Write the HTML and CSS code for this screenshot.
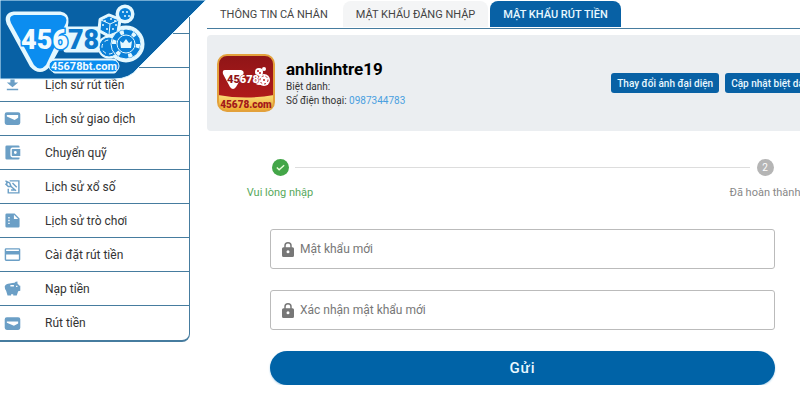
FILE: index.html
```html
<!DOCTYPE html>
<html lang="vi">
<head>
    <meta charset="UTF-8">
    <meta name="viewport" content="width=device-width, initial-scale=1.0">
    <title>Mật khẩu rút tiền</title>
    <link rel="stylesheet" href="styles.css">
</head>
<body>
    <a class="brand" href="#" aria-label="45678bt.com">
        <svg width="208" height="82" viewBox="0 0 208 82">
            <path d="M0 0H206L138 68Q130 79 114 79H0Z" fill="#0861a5" stroke="#d9f3ff" stroke-width="1"/>
            <!-- light outline behind the logo parts -->
            <g fill="#e4f8ff" stroke="#e4f8ff" stroke-width="5" stroke-linejoin="round">
                <path d="M14 14H60Q67 15 66 22L64 36L48 65Q40 74 32 65L9 23Q6 15 14 14Z"/>
                <path d="M66 29H98V50H66Z"/>
                <path d="M101 20L109 16L119 20L117 32L109 35L100 30Z"/>
                <circle cx="125" cy="14" r="7"/>
                <circle cx="109" cy="47" r="9"/>
                <circle cx="126" cy="44" r="16"/>
                <path d="M55 61H114Q119 66 114 71H55Q50 66 55 61Z"/>
            </g>
            <path d="M14 15H61Q68 16 66 23L46 65Q40 72 34 65L11 23Q8 16 14 15Z" fill="#0b8df0"/>
            <g fill="#0a80d8" stroke="#e4f8ff">
                <path d="M101 20L109 16L119 20L117 32L109 35L100 30Z"/>
                <path d="M101 20L110 24L119 20M110 24L109 35" fill="none"/>
                <circle cx="125" cy="14" r="6" stroke="none"/>
                <circle cx="109" cy="47" r="10"/>
                <circle cx="109" cy="47" r="7" fill="none" stroke-dasharray="4 3"/>
                <circle cx="126" cy="44" r="15"/>
                <circle cx="126" cy="44" r="12" fill="none" stroke-width="4" stroke-dasharray="4 8.5"/>
                <circle cx="126" cy="44" r="9"/>
            </g>
            <path d="M121 48L120 41L123 43L126 39L129 43L132 41L131 48Z" fill="#e4f8ff"/>
            <g fill="#e4f8ff">
                <circle cx="105" cy="21" r="1"/><circle cx="111" cy="19" r="1"/><circle cx="115" cy="21" r="1"/>
                <circle cx="103" cy="25" r="1"/><circle cx="107" cy="29" r="1"/><circle cx="113" cy="29" r="1"/><circle cx="116" cy="25" r="1"/>
                <circle cx="123" cy="12" r="1"/><circle cx="127" cy="12" r="1"/><circle cx="125" cy="16" r="1"/><circle cx="129" cy="16" r="1"/>
            </g>
            <text class="brand-number" x="21" y="49"><tspan class="brand-light">456</tspan><tspan class="brand-dark">78</tspan></text>
            <rect x="49" y="60" width="70" height="12" rx="6" fill="#0b8df0" stroke="#e4f8ff"/>
            <text class="brand-domain" x="84" y="70" text-anchor="middle">45678bt.com</text>
        </svg>
    </a>

    <div class="layout">
        <nav class="sidebar">
            <div class="sidebar-item"></div>
            <div class="sidebar-item"></div>
            <a class="sidebar-item" href="#">
                <svg viewBox="0 0 24 24"><path d="M9 3H15V9H20L12 16L4 9H9ZM4 18H20V20H4Z"/></svg>
                Lịch sử rút tiền
            </a>
            <a class="sidebar-item" href="#">
                <svg viewBox="0 0 24 24"><path fill-rule="evenodd" d="M4 3H20Q23 3 23 6V18Q23 21 20 21H4Q1 21 1 18V6Q1 3 4 3ZM4 7V9L15 14L20 11V7Z"/></svg>
                Lịch sử giao dịch
            </a>
            <a class="sidebar-item" href="#">
                <svg viewBox="0 0 24 24"><path fill-rule="evenodd" d="M4 2H20Q22 2 22 4V5H12Q9 5 9 8V16Q9 19 12 19H22V20Q22 22 20 22H4Q2 22 2 20V4Q2 2 4 2ZM12 7H23V17H12Q11 17 11 16V8Q11 7 12 7ZM16 10A2 2 0 0 0 16 14A2 2 0 0 0 16 10Z"/></svg>
                Chuyển quỹ
            </a>
            <a class="sidebar-item" href="#">
                <svg viewBox="0 0 24 24"><path d="M8 4H21V21H6V15M2 4L8 7L10 12L17 18M2 8L6 12H10M12 7L18 13M4 5V9M10 17H15" fill="none" stroke="currentColor" stroke-width="2"/></svg>
                Lịch sử xổ số
            </a>
            <a class="sidebar-item" href="#">
                <svg viewBox="0 0 24 24"><path fill-rule="evenodd" d="M4 2H15L22 9V20Q22 22 20 22H4Q2 22 2 20V4Q2 2 4 2ZM14 4V10H20ZM6 7V9H8V7ZM6 11V13H8V11ZM6 15V17H8V15Z"/></svg>
                Lịch sử trò chơi
            </a>
            <a class="sidebar-item" href="#">
                <svg viewBox="0 0 24 24"><path fill-rule="evenodd" d="M3 3H21Q23 3 23 5V19Q23 21 21 21H3Q1 21 1 19V5Q1 3 3 3ZM3 5V7H21V5ZM3 12V19H21V12Z"/></svg>
                Cài đặt rút tiền
            </a>
            <a class="sidebar-item" href="#">
                <svg viewBox="0 0 24 24"><path fill-rule="evenodd" d="M8 5Q12 4 15 4Q16 2 19 2V5L22 8H23V15L20 16L18 22H13V20H10V22H5L3 15Q1 13 1 9Q3 5 8 5ZM9 7V9H14V7ZM17 8V10H19V8Z"/></svg>
                Nạp tiền
            </a>
            <a class="sidebar-item" href="#">
                <svg viewBox="0 0 24 24"><path fill-rule="evenodd" d="M4 3H20Q23 3 23 6V18Q23 21 20 21H4Q1 21 1 18V6Q1 3 4 3ZM4 9V11L14 15L20 12V9Z"/></svg>
                Rút tiền
            </a>
        </nav>

        <main class="content">
            <div class="tabs" role="tablist">
                <button class="tab" role="tab">THÔNG TIN CÁ NHÂN</button>
                <button class="tab tab-hover" role="tab">MẬT KHẨU ĐĂNG NHẬP</button>
                <button class="tab tab-active" role="tab" aria-selected="true">MẬT KHẨU RÚT TIỀN</button>
            </div>

            <section class="profile">
                <svg class="avatar" viewBox="0 0 58 58">
                    <defs>
                        <linearGradient id="red" x1="0" y1="0" x2="0" y2="1">
                            <stop offset="0" stop-color="#8f1517"/>
                            <stop offset="1" stop-color="#b91c1c"/>
                        </linearGradient>
                        <linearGradient id="gold" x1="0" y1="0" x2="0" y2="1">
                            <stop offset="0" stop-color="#f9dc78"/>
                            <stop offset="1" stop-color="#eda72c"/>
                        </linearGradient>
                    </defs>
                    <rect x="1" y="1" width="56" height="56" rx="9" fill="url(#red)"/>
                    <path d="M1 41Q29 46 57 41V48Q57 57 48 57H10Q1 57 1 48Z" fill="url(#gold)"/>
                    <rect x="1" y="1" width="56" height="56" rx="9" fill="none" stroke="#e3a13c" stroke-width="2"/>
                    <path d="M8 16H24Q28 17 26 21L19 33Q16 37 13 33L6 20Q5 16 8 16Z" fill="#fff"/>
                    <g fill="#fff">
                        <circle cx="42" cy="18" r="4"/><circle cx="47" cy="15" r="2"/>
                        <circle cx="42" cy="27" r="4"/><circle cx="47" cy="26" r="6"/>
                    </g>
                    <circle cx="47" cy="26" r="4" fill="none" stroke="#b91c1c" stroke-width="1" stroke-dasharray="2 2"/>
                    <circle cx="47" cy="26" r="1" fill="#b91c1c"/>
                    <circle cx="41" cy="17" r="1" fill="#b91c1c"/><circle cx="43" cy="19" r="1" fill="#b91c1c"/>
                    <text class="avatar-number" x="10" y="29"><tspan fill="#8f1517">45</tspan><tspan class="avatar-light">678</tspan></text>
                    <text class="avatar-domain" x="29" y="54" text-anchor="middle">45678.com</text>
                </svg>
                <div class="profile-info">
                    <h1>anhlinhtre19</h1>
                    <p>Biệt danh:</p>
                    <p>Số điện thoại: <a href="#">0987344783</a></p>
                </div>
                <div class="profile-actions">
                    <button class="small-button">Thay đổi ảnh đại diện</button>
                    <button class="small-button">Cập nhật biệt danh</button>
                </div>
            </section>

            <div class="stepper">
                <div class="step step-done">
                    <span class="step-circle">
                        <svg viewBox="0 0 24 24"><path d="M4 12L9 17L20 7" fill="none" stroke="#e8ffd9" stroke-width="3"/></svg>
                    </span>
                    <span>Vui lòng nhập</span>
                </div>
                <div class="step-line"></div>
                <div class="step">
                    <span class="step-circle">2</span>
                    <span>Đã hoàn thành</span>
                </div>
            </div>

            <form class="password-form">
                <div class="field">
                    <svg viewBox="0 0 16 20"><path fill-rule="evenodd" d="M3 7V5A5 5 0 0 1 13 5V7H14Q16 7 16 9V18Q16 20 14 20H2Q0 20 0 18V9Q0 7 2 7ZM5 7H11V5A3 3 0 0 0 5 5ZM8 11A2 2 0 0 0 8 15A2 2 0 0 0 8 11Z"/></svg>
                    <input type="password" placeholder="Mật khẩu mới" aria-label="Mật khẩu mới">
                </div>
                <div class="field">
                    <svg viewBox="0 0 16 20"><path fill-rule="evenodd" d="M3 7V5A5 5 0 0 1 13 5V7H14Q16 7 16 9V18Q16 20 14 20H2Q0 20 0 18V9Q0 7 2 7ZM5 7H11V5A3 3 0 0 0 5 5ZM8 11A2 2 0 0 0 8 15A2 2 0 0 0 8 11Z"/></svg>
                    <input type="password" placeholder="Xác nhận mật khẩu mới" aria-label="Xác nhận mật khẩu mới">
                </div>
                <button class="submit" type="submit">Gửi</button>
            </form>
        </main>
    </div>
</body>
</html>
```

FILE: styles.css
```css
* { box-sizing: border-box; }
body { margin: 0; font-family: Roboto, "Liberation Sans", sans-serif; font-size: 12px; color: #333; background-color: #fff; overflow-x: hidden; }
button, input { font-family: inherit; }
a { text-decoration: none; }

/* corner logo, lies over the menu */
.brand { position: absolute; top: 0; left: 0; z-index: 2; }
.brand svg { display: block; }
.brand-number { font-size: 27px; font-weight: 900; paint-order: stroke; stroke-width: 3px; }
.brand-light { fill: #f2fbff; stroke: #0b8df0; }
.brand-dark { fill: #0b78cc; stroke: #e4f8ff; }
.brand-domain { font-size: 11px; font-weight: 700; fill: #f2fbff; }

.layout { display: flex; align-items: flex-start; gap: 17px; }

.sidebar { flex: 0 0 190px; border: 1px solid #467c9f; border-width: 0 1px 2px 0; border-radius: 0 0 8px 0; }
.sidebar-item { display: flex; align-items: center; gap: 24px; height: 34px; padding-left: 4px; color: #333; border-bottom: 1px solid #467c9f; }
.sidebar-item:last-child { border-bottom: none; }
.sidebar-item svg { width: 17px; height: 17px; fill: #6b9fc6; color: #6b9fc6; }

/* the content column runs past the right edge of the window */
.content { flex: 1; min-width: 0; margin-right: -38px; }

.tabs { display: flex; gap: 2px; height: 29px; padding-top: 1px; border-bottom: 1px solid #467c9f; }
.tab { height: 26px; padding: 0 13px; border: none; border-radius: 8px 8px 0 0; background: none; color: #444; font-size: 11px; white-space: nowrap; cursor: pointer; }
.tab-hover { background-color: #f4f5f6; }
.tab-active { background-color: #0861a5; color: #e8f8ff; font-weight: 500; }

.profile { display: flex; align-items: center; gap: 11px; margin-top: 6px; padding: 19px 17px 19px 10px; background-color: #ebeef1; border-radius: 4px; }
.avatar { width: 58px; height: 58px; }
.avatar-number { font-size: 11px; font-weight: 900; }
.avatar-light { fill: #fff; stroke: #a3191a; stroke-width: 1px; paint-order: stroke; }
.avatar-domain { font-size: 10px; font-weight: 900; fill: #a3191a; }
.profile-info h1 { margin: 0; font-size: 17px; line-height: 22px; font-weight: 700; color: #000; }
.profile-info p { margin: 0; font-size: 10px; line-height: 14px; }
.profile-info a { color: #4a9fe0; }
.profile-actions { display: flex; gap: 6px; margin-left: auto; }
.small-button { height: 20px; padding: 0 6px; border: none; border-radius: 3px; background-color: #0861a5; color: #e8f8ff; font-size: 10px; font-weight: 500; white-space: nowrap; cursor: pointer; }

.stepper { display: flex; align-items: flex-start; padding: 28px 33px 0; }
.step { display: flex; flex-direction: column; align-items: center; gap: 8px; width: 80px; font-size: 11px; line-height: 17px; color: #888; white-space: nowrap; }
.step-circle { display: flex; align-items: center; justify-content: center; width: 17px; height: 17px; border-radius: 50%; background-color: #b5b5b5; color: #fff; font-size: 10px; }
.step-circle svg { width: 11px; height: 11px; }
.step-done { color: #58a95c; }
.step-done .step-circle { background-color: #43a648; }
.step-line { flex: 1; height: 1px; margin: 8px -25px 0; background-color: #ddd; }

.password-form { display: flex; flex-direction: column; gap: 21px; padding: 28px 63px 0; }
.field { display: flex; align-items: center; gap: 6px; height: 40px; padding: 0 11px; border: 1px solid #bbb; border-radius: 3px; }
.field svg { width: 12px; height: 15px; fill: #777; }
.field input { flex: 1; height: 100%; padding: 0; border: none; outline: none; background: none; font-size: 12px; color: #333; }
.field input::placeholder { color: #777; }
.submit { height: 34px; border: none; border-radius: 17px; background-color: #0063a7; color: #e8f8ff; font-size: 15px; font-weight: 500; letter-spacing: 1px; box-shadow: 0 1px 2px #a9cfe8; cursor: pointer; }
```
